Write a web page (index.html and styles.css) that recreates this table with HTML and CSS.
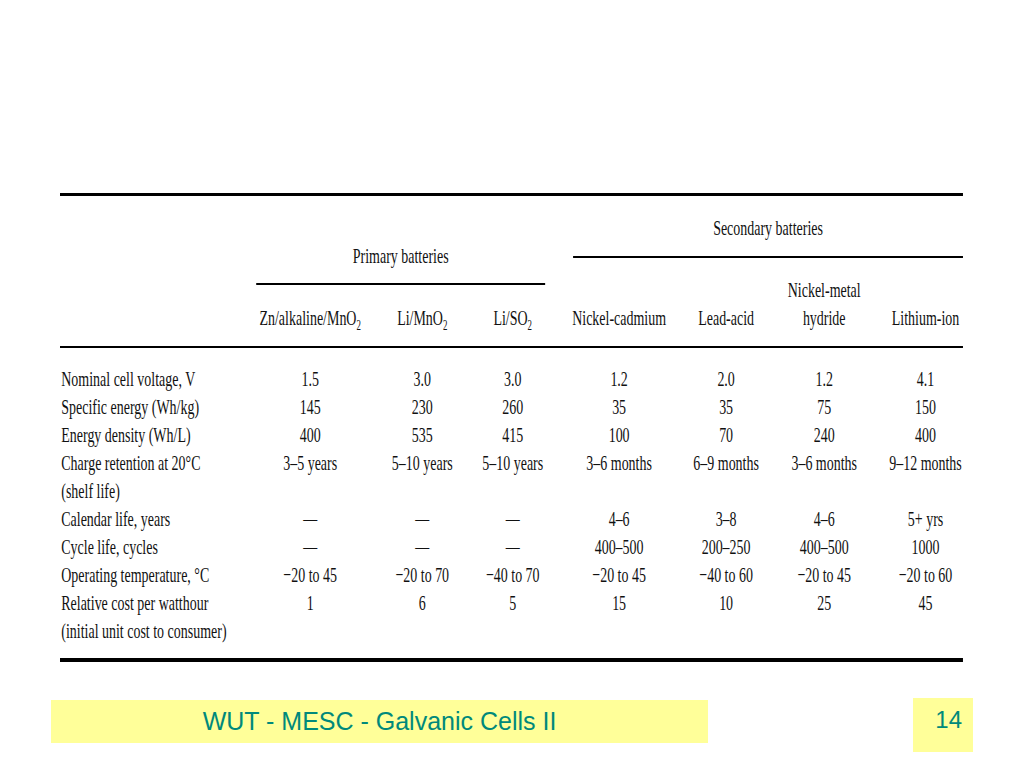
FILE: index.html
```html
<!DOCTYPE html>
<html lang="en">
<head>
<meta charset="utf-8">
<title>WUT - MESC - Galvanic Cells II</title>
<link rel="stylesheet" href="styles.css">
</head>
<body>
<div class="slide">
  <div class="table-wrap">
    <div class="table">
      <div class="head">
        <div class="lab-sp"></div>
        <div class="group group-primary">
          <div class="group-title">Primary batteries</div>
          <div class="cols cols-primary">
            <div>Zn/alkaline/MnO<span class="sub">2</span></div>
            <div>Li/MnO<span class="sub">2</span></div>
            <div>Li/SO<span class="sub">2</span></div>
          </div>
        </div>
        <div class="gap-sp"></div>
        <div class="group group-secondary">
          <div class="group-title">Secondary batteries</div>
          <div class="cols cols-secondary">
            <div>Nickel-cadmium</div>
            <div>Lead-acid</div>
            <div>Nickel-metal<br>hydride</div>
            <div class="last">Lithium-ion</div>
          </div>
        </div>
      </div>
      <div class="body">
        <div class="row"><div class="lab">Nominal cell voltage, V</div><div>1.5</div><div>3.0</div><div>3.0</div><div>1.2</div><div>2.0</div><div>1.2</div><div>4.1</div></div>
        <div class="row"><div class="lab">Specific energy (Wh/kg)</div><div>145</div><div>230</div><div>260</div><div>35</div><div>35</div><div>75</div><div>150</div></div>
        <div class="row"><div class="lab">Energy density (Wh/L)</div><div>400</div><div>535</div><div>415</div><div>100</div><div>70</div><div>240</div><div>400</div></div>
        <div class="row"><div class="lab">Charge retention at 20°C<br>(shelf life)</div><div>3–5 years</div><div>5–10 years</div><div>5–10 years</div><div>3–6 months</div><div>6–9 months</div><div>3–6 months</div><div>9–12 months</div></div>
        <div class="row"><div class="lab">Calendar life, years</div><div>—</div><div>—</div><div>—</div><div>4–6</div><div>3–8</div><div>4–6</div><div>5+ yrs</div></div>
        <div class="row"><div class="lab">Cycle life, cycles</div><div>—</div><div>—</div><div>—</div><div>400–500</div><div>200–250</div><div>400–500</div><div>1000</div></div>
        <div class="row"><div class="lab">Operating temperature, °C</div><div>−20 to 45</div><div>−20 to 70</div><div>−40 to 70</div><div>−20 to 45</div><div>−40 to 60</div><div>−20 to 45</div><div>−20 to 60</div></div>
        <div class="row"><div class="lab">Relative cost per watthour<br>(initial unit cost to consumer)</div><div>1</div><div>6</div><div>5</div><div>15</div><div>10</div><div>25</div><div>45</div></div>
      </div>
    </div>
  </div>
  <div class="footer">
    <div class="foot-title">WUT - MESC - Galvanic Cells II</div>
    <div class="foot-num">14</div>
  </div>
</div>
</body>
</html>
```

FILE: styles.css
```css
:root {
  --lab: 309px;
  --c1: 170px;
  --c2: 183px;
  --c3: 102px;
  --gap: 44px;
  --c4: 145px;
  --c5: 192px;
  --c6: 117px;
  --sp: 42px;
  --c7: 118px;
}

html, body {
  margin: 0;
  padding: 0;
  background: #ffffff;
  overflow: hidden;
}

.slide {
  width: 1024px;
  height: 768px;
  padding-top: 193px;
  box-sizing: border-box;
}

.table-wrap {
  margin-left: 60px;
  width: 903px;
  overflow: hidden;
}

.table {
  width: 1422px;
  transform: scaleX(0.635);
  transform-origin: 0 0;
  font-family: "Liberation Serif", "Times New Roman", serif;
  font-size: 22px;
  line-height: 28px;
  color: #111111;
  border-top: 3px solid #000;
  border-bottom: 4px solid #000;
}

.head {
  display: flex;
  align-items: flex-end;
  padding: 18px 0 14px;
  border-bottom: 2px solid #000;
}

.lab-sp { width: var(--lab); flex: none; }
.gap-sp { width: var(--gap); flex: none; }

.group {
  display: flex;
  flex-direction: column;
  flex: none;
}

.group-primary { width: calc(var(--c1) + var(--c2) + var(--c3)); }
.group-secondary { width: calc(var(--c4) + var(--c5) + var(--c6) + var(--sp) + var(--c7)); }

.group-title {
  text-align: center;
  padding-bottom: 14px;
  border-bottom: 2px solid #000;
  margin-bottom: 18px;
  white-space: nowrap;
}

.group-primary .group-title {
  padding-bottom: 13px;
  margin-bottom: 19px;
}

.cols {
  display: grid;
  align-items: end;
  text-align: center;
  white-space: nowrap;
}

.cols > div { justify-self: center; }

.cols-primary {
  grid-template-columns: var(--c1) var(--c2) var(--c3);
}

.cols-secondary {
  grid-template-columns: var(--c4) var(--c5) var(--c6) var(--sp) var(--c7);
}

.cols-secondary .last { grid-column: 5; }

.sub {
  font-size: 14px;
  line-height: 0;
  vertical-align: -5px;
}

.body {
  padding: 17px 0 13px;
}

.row {
  display: grid;
  grid-template-columns: var(--lab) var(--c1) var(--c2) var(--c3) var(--gap) var(--c4) var(--c5) var(--c6) var(--sp) var(--c7);
  align-items: start;
  white-space: nowrap;
}

.row > div {
  justify-self: center;
  text-align: center;
}

.row > .lab {
  justify-self: start;
  text-align: left;
  padding-left: 2px;
}

.row > :nth-child(5) { grid-column: 6; }
.row > :nth-child(8) { grid-column: 10; }

.footer {
  display: flex;
  align-items: flex-start;
  margin-top: 36px;
  padding-left: 51px;
  font-family: "Liberation Sans", Arial, sans-serif;
  color: #00897b;
}

.foot-title {
  width: 657px;
  height: 43px;
  margin-top: 2px;
  background: #ffff99;
  display: flex;
  align-items: center;
  justify-content: center;
  font-size: 25px;
}

.foot-num {
  margin-left: 205px;
  width: 60px;
  height: 54px;
  box-sizing: border-box;
  padding: 8px 11px 0 0;
  background: #ffff99;
  text-align: right;
  font-size: 24px;
  line-height: 28px;
}
```
